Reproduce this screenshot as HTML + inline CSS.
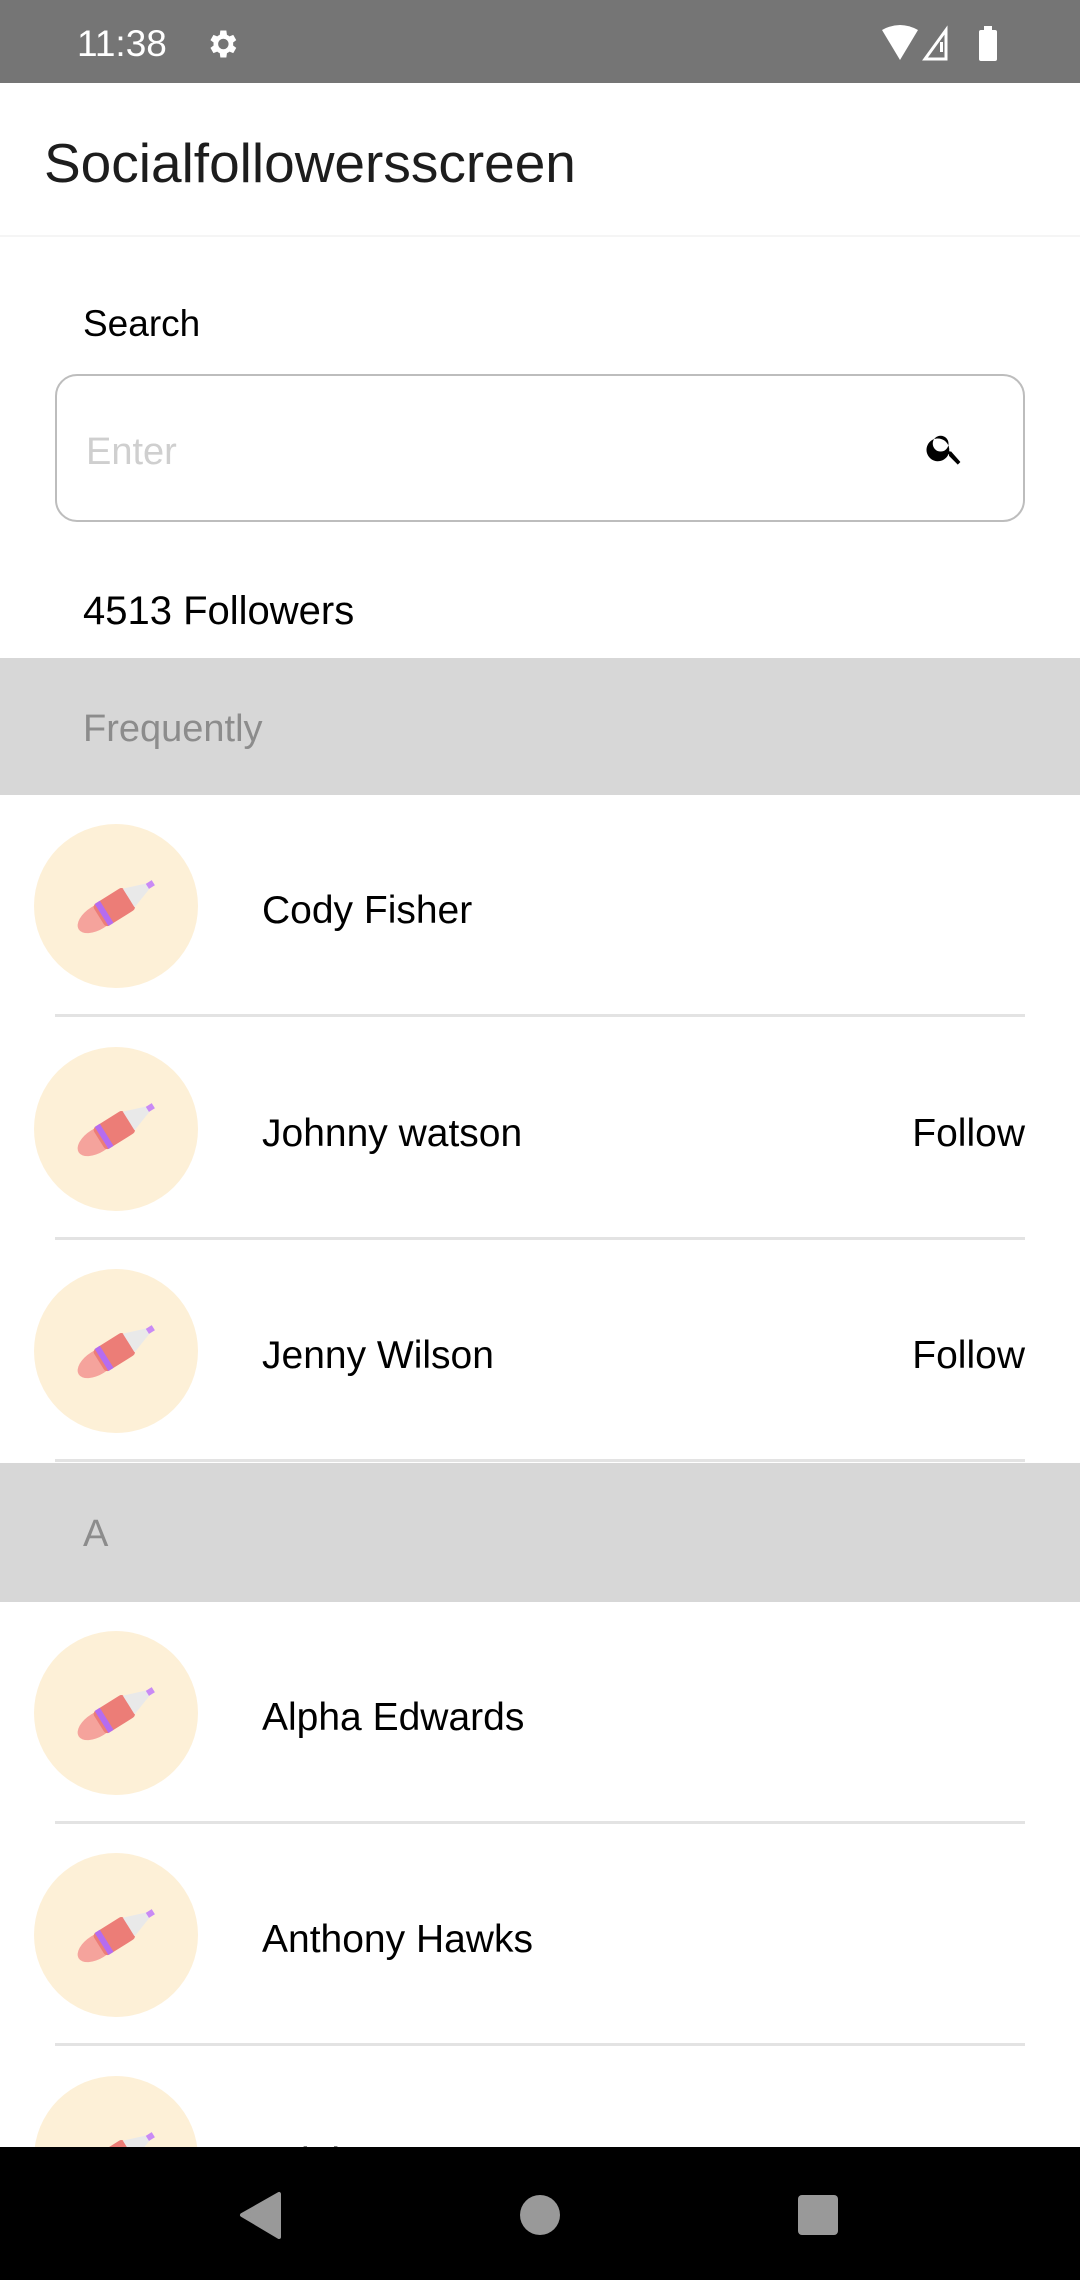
<!DOCTYPE html>
<html><head><meta charset="utf-8"><style>
*{margin:0;padding:0;box-sizing:border-box}
body{width:1080px;height:2280px;overflow:hidden;background:#fff;font-family:"Liberation Sans",sans-serif;position:relative;color:#000}
.abs{position:absolute}
.t{position:absolute;font-size:38px;line-height:1;white-space:nowrap}
.row{position:absolute;left:0;width:1080px;height:222px}
.av{position:absolute;left:34px;top:29px;width:164px;height:164px;border-radius:50%;background:#fdf0d7}
.av svg{position:absolute;left:0;top:0}
.name{position:absolute;left:262px;top:96px;font-size:39px;line-height:1}
.fol{position:absolute;right:55px;top:96px;font-size:39px;line-height:1}
.div{position:absolute;left:55px;width:970px;height:3px;background:#e3e3e3;bottom:0}
.hdr{position:absolute;left:0;width:1080px;background:#d7d7d7}
.hdr span{position:absolute;left:83px;font-size:38px;color:#8c8c8c;line-height:1}
</style></head><body>
<div class="abs" style="left:0;top:0;width:1080px;height:83px;background:#757575"></div>
<div class="t" style="left:77px;top:25px;font-size:37px;color:#fff">11:38</div>
<svg class="abs" style="left:204px;top:26px" width="36" height="36" viewBox="0 0 24 24"><path fill="#fff" d="M19.4 13a7.5 7.5 0 0 0 0-2l2.1-1.6-2-3.5-2.5 1a7 7 0 0 0-1.7-1L14.9 3h-4l-.4 2.9a7 7 0 0 0-1.7 1l-2.5-1-2 3.5L6.4 11a7.5 7.5 0 0 0 0 2l-2.1 1.6 2 3.5 2.5-1a7 7 0 0 0 1.7 1l.4 2.9h4l.4-2.9a7 7 0 0 0 1.7-1l2.5 1 2-3.5zM12.9 15.5a3.5 3.5 0 1 1 0-7 3.5 3.5 0 0 1 0 7z"/></svg>
<svg class="abs" style="left:880px;top:24px" width="130" height="38" viewBox="0 0 130 38"><path fill="#fff" d="M2 6 Q20 -4 38 6 L20 36 Z"/><path fill="none" stroke="#fff" stroke-width="3" d="M45 35 L66 6 L66 35 Z"/><rect x="60" y="18" width="3" height="10" fill="#fff"/><rect x="99" y="6" width="18" height="31" rx="2" fill="#fff"/><rect x="104" y="2" width="8" height="5" fill="#fff"/></svg>
<div class="abs" style="left:0;top:235px;width:1080px;height:2px;background:#f5f5f5"></div>
<div class="t" style="left:44px;top:136px;font-size:55px;color:#1d1d1d">Socialfollowersscreen</div>
<div class="t" style="left:83px;top:305px;font-size:37px">Search</div>
<div class="abs" style="left:55px;top:374px;width:970px;height:148px;border:2px solid #bdbdbd;border-radius:22px"></div>
<div class="t" style="left:86px;top:433px;font-size:38px;color:#cfcfcf">Enter</div>
<svg class="abs" style="left:924px;top:427px" width="42" height="42" viewBox="0 0 24 24"><path fill="#000" d="M15.5 14h-.8l-.3-.3A6.5 6.5 0 1 0 14 15.4l.3.3v.8l5 5 1.5-1.5zm-6 0a4.5 4.5 0 1 1 0-9 4.5 4.5 0 0 1 0 9z"/></svg>
<div class="t" style="left:83px;top:591px;font-size:40px">4513 Followers</div>
<div class="hdr" style="top:658px;height:137px"><span style="top:52px">Frequently</span></div>

<svg width="0" height="0" style="position:absolute"><defs><g id="ic"><g transform="translate(82,82) rotate(-32)"><ellipse cx="-22" cy="0" rx="22" ry="12" fill="#f5a39c"/><rect x="-20" y="-13" width="36" height="26" rx="4" fill="#ec7d77"/><rect x="-17" y="-13" width="6" height="26" fill="#b56cf0"/><path d="M15 -11 L38 -3 L38 3 L15 11 Z" fill="#e9e9e9"/><rect x="37" y="-3" width="7" height="6" fill="#c98af5"/></g></g></defs></svg>

<div class="row" style="top:795px"><div class="av"><svg width="164" height="164"><use href="#ic"/></svg></div><div class="name">Cody Fisher</div><div class="div"></div></div>
<div class="row" style="top:1018px"><div class="av"><svg width="164" height="164"><use href="#ic"/></svg></div><div class="name">Johnny watson</div><div class="fol">Follow</div><div class="div"></div></div>
<div class="row" style="top:1240px"><div class="av"><svg width="164" height="164"><use href="#ic"/></svg></div><div class="name">Jenny Wilson</div><div class="fol">Follow</div><div class="div"></div></div>
<div class="hdr" style="top:1463px;height:139px"><span style="top:52px">A</span></div>
<div class="row" style="top:1602px"><div class="av"><svg width="164" height="164"><use href="#ic"/></svg></div><div class="name">Alpha Edwards</div><div class="div"></div></div>
<div class="row" style="top:1824px"><div class="av"><svg width="164" height="164"><use href="#ic"/></svg></div><div class="name">Anthony Hawks</div><div class="div"></div></div>
<div class="row" style="top:2047px"><div class="av"><svg width="164" height="164"><use href="#ic"/></svg></div><div class="name">Arial Hammer</div></div>

<div class="abs" style="left:0;top:2147px;width:1080px;height:133px;background:#000"></div>
<svg class="abs" style="left:0;top:2147px" width="1080" height="133"><path d="M279 47 L279 90 L242 68 Z" fill="#999" stroke="#999" stroke-width="4" stroke-linejoin="round"/><circle cx="540" cy="68" r="20" fill="#999"/><rect x="798" y="48" width="40" height="40" rx="4" fill="#999"/></svg>
</body></html>
